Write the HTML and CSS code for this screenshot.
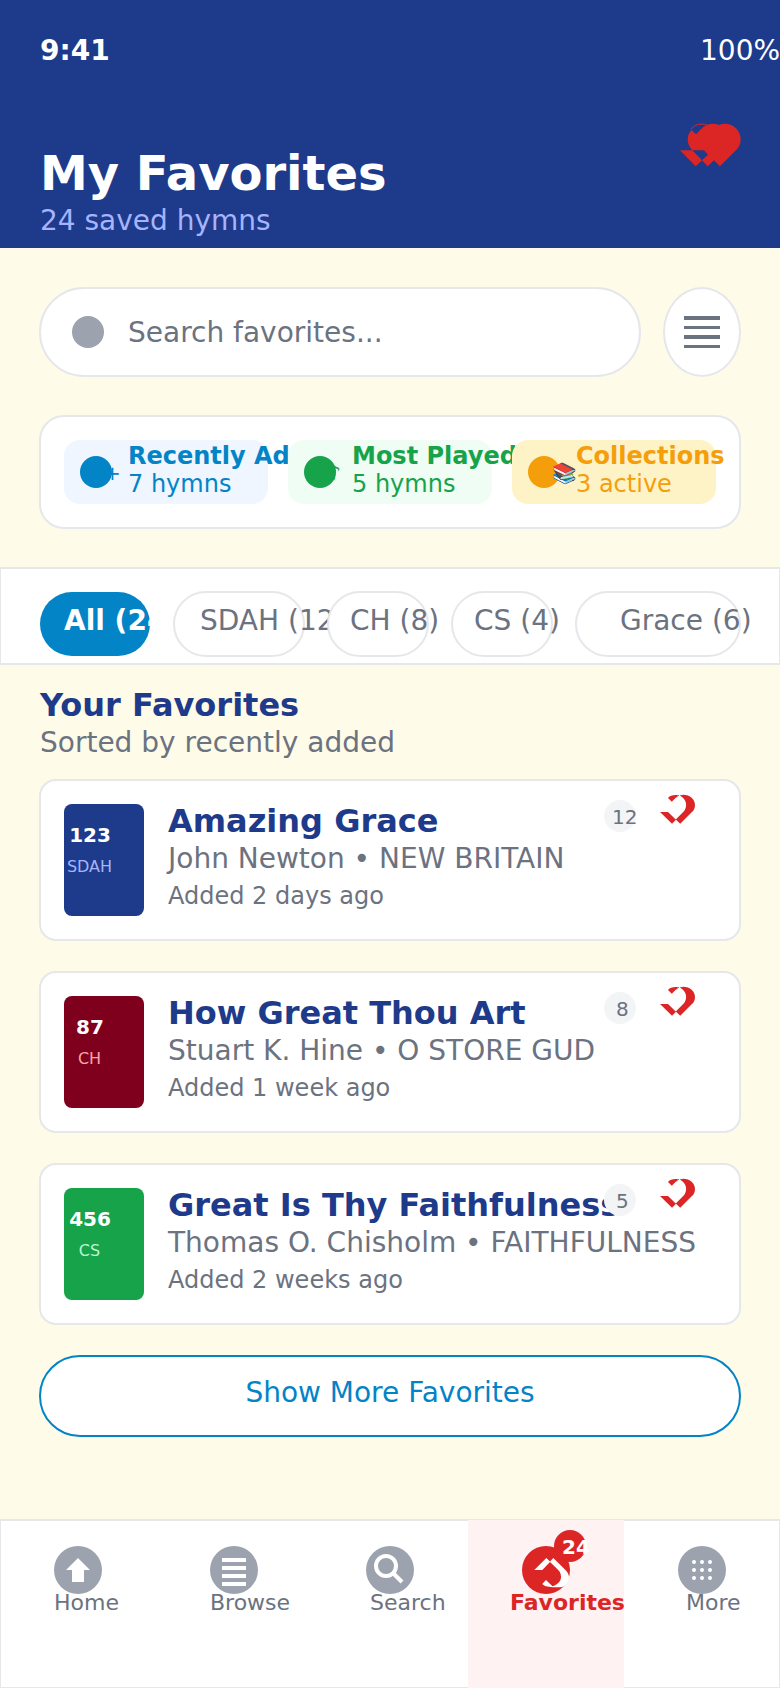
FILE: index.html
```html
<!DOCTYPE html>
<html lang="en">
<head>
<meta charset="utf-8">
<title>My Favorites</title>
<link rel="stylesheet" href="styles.css">
</head>
<body>
<svg class="defs" width="0" height="0">
  <symbol id="heart" viewBox="0 0 40 32">
    <path d="M4 20H12L19.7 27.5L27 20.3C32.5 14.5 30.5 6.5 23.7 3.4C20.5 4.5 18.5 7 15.8 9.8L12 6C14 3.4 17 2.8 20.5 3L23.5 3.4L27.3 2.8C34 2.8 39 7.5 39 13.2C39 16.2 37.8 18.5 35.7 20.3L24.2 31.8L20 27.8L16 31.8Z"/>
  </symbol>
</svg>
<div class="app">
  <header class="header">
    <div class="status"><span class="time">9:41</span><span>100%</span></div>
    <div class="heading">
      <div>
        <h1 class="title">My Favorites</h1>
        <p class="subtitle">24 saved hymns</p>
      </div>
      <svg class="hearts" width="64" height="48" viewBox="0 0 192 144">
        <path fill-rule="evenodd" d="M0 88L47 136L66 118L83 136L102 118L120 136L168 88C177 79 182 69 182 55C182 29 161 8 135 8C129 8 123 9 117 12C106 7 91 7 80 12C67 18 58 30 48 40L35 27C27 35 23 44 23 55C23 68 28 79 37 88ZM37 88H72L84 101L66 118Z"/>
        <path class="sliver" d="M33 25C42 12 60 6 80 11"/>
      </svg>
    </div>
  </header>

  <div class="search-row">
    <div class="search"><span class="dot"></span>Search favorites...</div>
    <div class="menu"><i></i><i></i><i></i><i></i></div>
  </div>

  <section class="quick">
    <div class="tile blue"><span class="dot"></span><span class="glyph">+</span><div><b>Recently Added</b><p>7 hymns</p></div></div>
    <div class="tile green"><span class="dot"></span><span class="glyph">♪</span><div><b>Most Played</b><p>5 hymns</p></div></div>
    <div class="tile amber"><span class="dot"></span><span class="glyph">📚</span><div><b>Collections</b><p>3 active</p></div></div>
  </section>

  <nav class="filters">
    <span class="pill all">All (24)</span>
    <span class="pill sdah">SDAH (12)</span>
    <span class="pill ch">CH (8)</span>
    <span class="pill cs">CS (4)</span>
    <span class="pill grace">Grace (6)</span>
  </nav>

  <section class="section-head">
    <h2>Your Favorites</h2>
    <p>Sorted by recently added</p>
  </section>

  <main class="list">
    <article class="card">
      <div class="book navy"><b>123</b><span>SDAH</span></div>
      <div class="info"><h3>Amazing Grace</h3><p>John Newton • NEW BRITAIN</p><small>Added 2 days ago</small></div>
      <span class="count wide">12</span>
      <svg class="fav" width="40" height="32"><use href="#heart"/></svg>
    </article>
    <article class="card">
      <div class="book maroon"><b>87</b><span>CH</span></div>
      <div class="info"><h3>How Great Thou Art</h3><p>Stuart K. Hine • O STORE GUD</p><small>Added 1 week ago</small></div>
      <span class="count">8</span>
      <svg class="fav" width="40" height="32"><use href="#heart"/></svg>
    </article>
    <article class="card">
      <div class="book leaf"><b>456</b><span>CS</span></div>
      <div class="info"><h3>Great Is Thy Faithfulness</h3><p>Thomas O. Chisholm • FAITHFULNESS</p><small>Added 2 weeks ago</small></div>
      <span class="count">5</span>
      <svg class="fav" width="40" height="32"><use href="#heart"/></svg>
    </article>
  </main>

  <div class="more">Show More Favorites</div>

  <nav class="tabs">
    <div class="tab home">
      <svg width="48" height="48"><circle cx="24" cy="24" r="24"/><path class="w" d="M12 24L24 12L36 24H30V36H18V24Z"/></svg>
      <span>Home</span>
    </div>
    <div class="tab browse">
      <svg width="48" height="48"><circle cx="24" cy="24" r="24"/><path class="w" d="M12 12h24v4H12zM12 20h24v4H12zM12 28h24v4H12zM12 36h24v4H12z"/></svg>
      <span>Browse</span>
    </div>
    <div class="tab find">
      <svg width="48" height="48"><circle cx="24" cy="24" r="24"/><circle class="line" cx="20" cy="20" r="10"/><path class="line" d="M27 27L36 36"/></svg>
      <span>Search</span>
    </div>
    <div class="tab active">
      <svg width="48" height="48"><circle cx="24" cy="24" r="24"/><path class="w" d="M12.3 24L24.3 12L28 15.4L31.3 12L42.7 23.3C45.5 26 47.5 29 47 32.5C46 36.5 43.5 39.5 40.3 41C36 41.6 30 41.4 27.5 40.8C24.5 40.6 21.5 39.5 20.3 38L24 34L30.5 40.2C36.5 38.3 39.2 34.5 39 30.5C38.8 27 37.5 25 35 22.8L28 16L20.3 24Z"/></svg>
      <span>Favorites</span>
      <em class="badge">24</em>
    </div>
    <div class="tab rest">
      <svg width="48" height="48"><circle cx="24" cy="24" r="24"/><g class="w"><circle cx="16" cy="16" r="2"/><circle cx="24" cy="16" r="2"/><circle cx="32" cy="16" r="2"/><circle cx="16" cy="24" r="2"/><circle cx="24" cy="24" r="2"/><circle cx="32" cy="24" r="2"/><circle cx="16" cy="32" r="2"/><circle cx="24" cy="32" r="2"/><circle cx="32" cy="32" r="2"/></g></svg>
      <span>More</span>
    </div>
  </nav>
</div>
</body>
</html>
```
FILE: styles.css
```css
* { box-sizing: border-box; margin: 0; padding: 0; }
body {
  width: 780px;
  height: 1688px;
  overflow: hidden;
  background: #fffbeb;
  color: #6b7280;
  font: 28px/33px "DejaVu Sans", sans-serif;
  white-space: nowrap;
}
.defs { position: absolute; }
svg { display: block; }
.app { display: flex; flex-direction: column; height: 1688px; background: #fefbe8; }

.header { height: 248px; flex: none; padding: 34px 0 0 40px; background: #1e3a8a; color: #fff; }
.status { display: flex; justify-content: space-between; }
.status span:last-child { width: 80px; }
.time { font-weight: bold; }
.heading { display: flex; justify-content: space-between; padding-right: 36px; margin-top: 54px; }
.title { margin-top: 24px; font-size: 48px; line-height: 56px; }
.subtitle { margin-top: 3px; color: #a5b4fc; }
.hearts { fill: #dc2626; }
.sliver { fill: none; stroke: #dc2626; stroke-width: 3; }

.search-row { display: flex; gap: 22px; margin: 39px 39px 0; }
.search {
  display: flex; align-items: center; gap: 24px;
  width: 602px; height: 90px; padding: 0 0 0 31px;
  border: 2px solid #e5e7eb; border-radius: 45px; background: #fff;
}
.dot { width: 32px; height: 32px; flex: none; border-radius: 50%; background: #9ca3af; }
.menu {
  display: flex; flex-direction: column; gap: 6px;
  width: 78px; height: 90px; padding: 27px 19px;
  border: 2px solid #e5e7eb; border-radius: 50%; background: #fff;
}
.menu i { height: 4px; background: #6b7280; }

.quick {
  display: flex; gap: 20px; height: 114px; flex: none;
  margin: 38px 39px 0; padding: 23px;
  border: 2px solid #e5e7eb; border-radius: 25px; background: #fff;
}
.tile {
  position: relative; display: flex; gap: 16px;
  width: 204px; height: 64px; flex: none; padding: 2px 0 0 16px;
  border-radius: 16px; font-size: 24px; line-height: 28px;
}
.tile .dot { margin-top: 14px; background: currentColor; }
.tile b { display: block; }
.glyph { position: absolute; left: 40px; top: 21px; font-size: 20px; line-height: 24px; }
.blue { background: #eff6ff; color: #0284c7; }
.green { background: #f0fdf4; color: #16a34a; }
.amber { background: #fef3c7; color: #f59e0b; }

.filters {
  display: flex; gap: 22px; height: 98px; flex: none; margin-top: 38px; padding: 22px 0 0 38px;
  border: solid #e5e7eb; border-width: 2px 1px; background: #fff;
}
.pill {
  height: 66px; flex: none; padding: 11px 0 0 24px;
  border: 2px solid #e5e7eb; border-radius: 33px; background: #fff;
}
.all { width: 110px; height: 64px; margin: 1px; padding: 12px 0 0 24px; border: 0; background: #0284c7; color: #fff; font-weight: bold; }
.sdah { width: 132px; padding-left: 25px; }
.ch { width: 102px; padding-left: 21px; }
.cs { width: 102px; padding-left: 21px; }
.grace { width: 166px; padding-left: 43px; }

.section-head { padding: 21px 40px 0; }
h2, h3 { font-size: 32px; line-height: 38px; color: #1e3a8a; }
.section-head p { margin-top: 2px; }

.list { display: flex; flex-direction: column; gap: 30px; margin: 20px 39px 0; }
.card {
  position: relative; display: flex; gap: 24px; height: 162px; padding: 23px 0 0 23px;
  border: 2px solid #e5e7eb; border-radius: 17px; background: #fff;
}
.book {
  display: flex; flex-direction: column; align-items: center; gap: 10px;
  width: 80px; height: 112px; flex: none; padding: 19px 28px 0 0;
  border-radius: 8px; font-size: 16px; line-height: 19px;
}
.book b { color: #fff; font-size: 20px; line-height: 24px; }
.book span { margin-right: 1px; }
.navy { background: #1e3a8a; color: #a5b4fc; }
.maroon { background: #7f001d; color: #fca5a5; }
.leaf { background: #16a34a; color: #bbf7d0; }
.info { margin-top: -2px; }
.info p { margin-top: 2px; }
.info small { display: block; margin-top: 7px; font-size: 24px; line-height: 28px; }
.count {
  position: absolute; left: 563px; top: 19px; width: 32px; height: 32px; padding: 5px 0 0 12px;
  border-radius: 50%; background: #f3f4f6; font-size: 20px; line-height: 24px;
}
.wide { padding-left: 8px; }
.fav { position: absolute; left: 615px; top: 11px; fill: #dc2626; }

.more {
  height: 82px; margin: 30px 39px 0; padding-top: 19px;
  border: 2px solid #0284c7; border-radius: 41px; background: #fff; color: #0284c7; text-align: center;
}

.tabs {
  display: grid; grid-template-columns: repeat(5, 156px);
  height: 169px; margin-top: auto;
  background: #fff; box-shadow: inset 0 2px #e5e7eb, inset 1px 0 #e5e7eb, inset -1px -1px #e5e7eb;
}
.tab { position: relative; padding: 27px 0 0 54px; font-size: 22px; line-height: 25px; fill: #9ca3af; }
.tab span { display: block; margin-top: -4px; }
.w { fill: #fff; }
.line { fill: none; stroke: #fff; stroke-width: 4; }
.find span { margin-left: 4px; }
.rest span { margin-left: 8px; }
.active { margin-top: 1px; padding-top: 26px; background: #fef2f2; color: #dc2626; fill: #dc2626; font-weight: bold; }
.active span { margin-left: -12px; }
.badge {
  position: absolute; left: 86px; top: 10px; width: 32px; height: 32px; padding: 5px 0 0 8px;
  border-radius: 50%; background: #dc2626; color: #fff; font-size: 20px; line-height: 24px; font-style: normal;
}
```
